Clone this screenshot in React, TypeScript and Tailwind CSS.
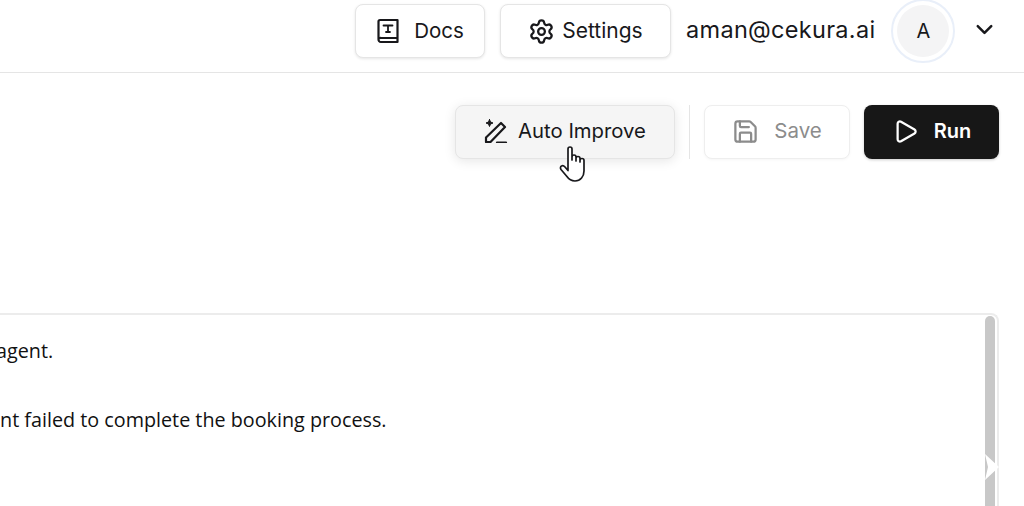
import { ChevronDown, Play, Save, Settings } from "lucide-react";

function DocsIcon() {
  return (
    <svg width="24" height="26" viewBox="0 0 24 26" fill="none" stroke="#18181b" strokeWidth="2.2" strokeLinecap="round" strokeLinejoin="round">
      <path d="M2.500 21V3.500A1.500 1.500 0 0 1 4 2h17.500v22H5a2.500 2.500 0 0 1-2.500-3 2.500 2.500 0 0 1 2.500-1h16.500" />
      <path d="M7.500 7.500h9M12 7.500v6.500M10 14h4" strokeWidth="1.8" />
    </svg>
  );
}

function ImproveIcon() {
  return (
    <svg width="24" height="24" viewBox="0 0 24 24" fill="none" stroke="#18181b" strokeWidth="2.2" strokeLinecap="round" strokeLinejoin="round">
      <path d="M2 23v-4.500L17 4l4 4L6.500 23H2Z" />
      <path d="M13 23.500h9" />
      <path d="M5.500 0.500l1 2.500L9 4l-2.500 1-1 2.500-1-2.500L2 4l2.500-1 1-2.500Z" fill="#18181b" strokeWidth="1" />
    </svg>
  );
}

function HandCursor() {
  return (
    <svg width="30" height="38" viewBox="0 0 30 38" fill="#fff" stroke="#18181b" strokeWidth="1.7" strokeLinecap="round" strokeLinejoin="round">
      <path d="M10 20V4a2 2 0 0 1 4 0v11V12a2 2 0 0 1 4 0v4-2.500a2 2 0 0 1 4 0V17v-1.500a2 2 0 0 1 4 0V26c0 5.500-3.500 10-9 10-4 0-6-1.500-8.500-5L3 24.500c-1-1.500-.5-3 .5-3.500 1.300-.7 2.600 0 3.500 1l3 3.500V20Z" />
    </svg>
  );
}

export default function App() {
  return (
    <div className="relative h-[506px] w-[1024px] overflow-hidden bg-white font-['Inter',sans-serif] text-[#18181b]">
      <header className="flex h-[73px] items-start border-b border-[#e5e5e5] bg-white pl-[355px] pt-1">
        <button className="flex h-[54px] w-[130px] items-center justify-center gap-[14px] rounded-lg border border-[#e5e5e5] bg-white text-[20.500px] shadow-[0_1px_3px_rgba(0,0,0,0.1)]">
          <DocsIcon />
          Docs
        </button>
        <button className="ml-[15px] flex h-[54px] w-[171px] items-center justify-center gap-[7px] rounded-lg border border-[#e5e5e5] bg-white text-[21px] shadow-[0_1px_3px_rgba(0,0,0,0.1)]">
          <Settings size={27} strokeWidth={2} />
          Settings
        </button>
        <span className="ml-[15px] mt-[8px] text-[23.500px] leading-9 tracking-[0.3px]">aman@cekura.ai</span>
        <div className="ml-[16px] -mt-[5px] flex h-[64px] w-[64px] items-center justify-center rounded-full border-[2px] border-[#e9eff9] bg-white">
          <div className="flex h-[52px] w-[52px] items-center justify-center rounded-full bg-[#f4f4f5] text-[20px]">A</div>
        </div>
        <ChevronDown size={27} strokeWidth={2.2} className="ml-[16px] mt-[12px]" />
      </header>

      <div className="flex items-stretch pl-[455px] pt-[32px]">
        <button className="flex h-[54px] w-[220px] items-center justify-center gap-2.5 rounded-lg border border-[#e5e5e5] bg-[#f5f5f5] pb-[2px] text-[20.300px] shadow-[0_2px_12px_rgba(0,0,0,0.1)]">
          <ImproveIcon />
          Auto Improve
        </button>
        <div className="mx-[14px] w-px bg-[#e5e5e5]" />
        <button className="flex h-[54px] w-[146px] items-center justify-center gap-[15px] rounded-lg border border-[#eeeeee] bg-white pb-[2px] text-[20.500px] text-[#8c8c8c] shadow-[0_1px_3px_rgba(0,0,0,0.04)]">
          <Save size={27} strokeWidth={2} />
          Save
        </button>
        <button className="ml-[14px] flex h-[54px] w-[135px] items-center justify-center gap-[15px] rounded-lg bg-[#171717] pb-[2px] text-[20px] font-semibold text-white shadow-[0_1px_3px_rgba(0,0,0,0.2)]">
          <Play size={27} strokeWidth={2} />
          Run
        </button>
      </div>

      <section className="mt-[154px] flex h-[300px] w-[999px] rounded-tr-lg border-r-2 border-t-2 border-[#ececec]">
        <div className="flex-1 overflow-hidden pt-[19px] font-['Open_Sans',sans-serif] text-[19.750px] leading-[34px] text-[#111111]">
          <p className="-ml-[4px]">agent.</p>
          <p className="-ml-[11px] mt-[35px] whitespace-nowrap">ent failed to complete the booking process.</p>
        </div>
        <div className="mr-[2px] mt-[1px] w-[10px] rounded-t-full bg-[#c8c8c8]" />
      </section>

      <HandAndArrow />
    </div>
  );
}

function HandAndArrow() {
  return (
    <>
      <div className="absolute left-[558px] top-[145px]">
        <HandCursor />
      </div>
      <svg className="absolute left-[984px] top-[454px]" width="16" height="26" viewBox="0 0 16 26" fill="#fff">
        <path d="M1 0 15 13 1 26 4 13Z" />
      </svg>
    </>
  );
}
